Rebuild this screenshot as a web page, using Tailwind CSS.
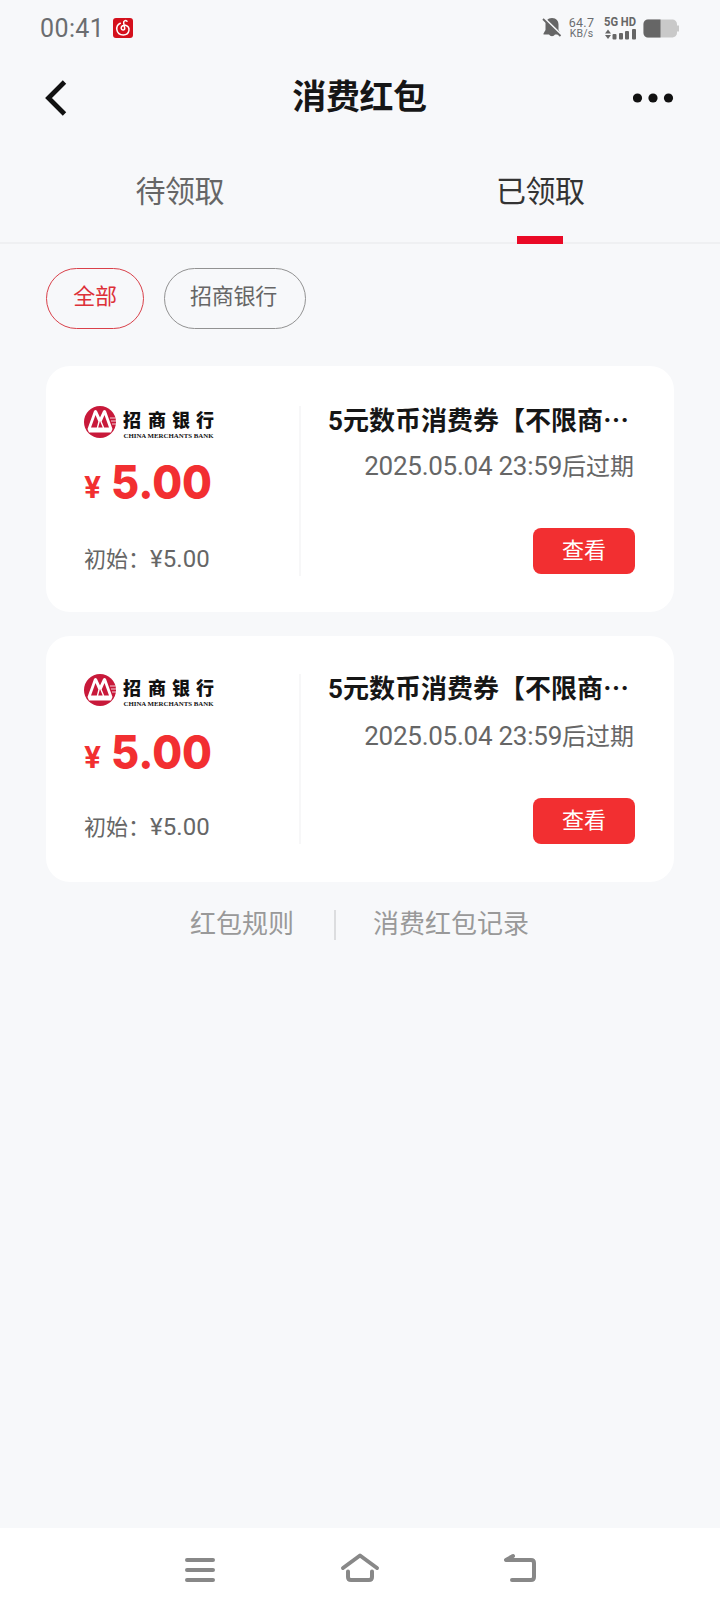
<!DOCTYPE html>
<html lang="zh-CN">
<head>
<meta charset="utf-8">
<title>消费红包</title>
<script src="https://cdn.jsdelivr.net/npm/@tailwindcss/browser@4"></script>
</head>
<body class="bg-[#f7f8fa]">
<svg class="hidden">
  <defs>
    <g id="bank">
      <circle cx="16" cy="16" r="16" fill="#c8193a"/>
      <path d="M26 12 H31.500 M27 15 H32 M28 18 H32" stroke="#fff" stroke-width=".8"/>
      <path d="M3.500 23 L10 5 Q11.500 3 13 5 L16 11.500 L19 5 Q20.500 3 22 5 L28.500 23 L27 26.500 H5 Z" fill="#fff"/>
      <path d="M7 21.500 L11.500 9 L14.300 15.500 L12.800 21.500 Z M16 15 L18.700 21.500 H14.200 Z M20.500 9 L25 21.500 H20.200 L17.700 15.500 Z" fill="#c8193a"/>
      <g font-family="'Noto Sans CJK SC', sans-serif" font-weight="900" font-size="18" fill="#111">
        <text x="39" y="21">招</text><text x="64" y="21">商</text><text x="88" y="21">银</text><text x="112" y="21">行</text>
      </g>
      <text x="39.500" y="31.500" font-family="'Liberation Serif', serif" font-weight="700" font-size="6.500" fill="#111" textLength="90" lengthAdjust="spacingAndGlyphs">CHINA MERCHANTS BANK</text>
    </g>
    <text id="amount" x="0" y="34.500" font-family="Inter" font-weight="800" font-size="46" fill="#f22f31" textLength="101" lengthAdjust="spacingAndGlyphs">5.00</text>
  </defs>
</svg>
<div class="flex h-[1612px] w-[720px] flex-col overflow-hidden font-['Roboto','Noto_Sans_CJK_SC',sans-serif] whitespace-nowrap">

  <header class="flex h-14 items-center justify-between pr-[41px] pl-10">
    <div class="flex items-center">
      <span class="w-[73px] pt-0.5 text-[25px] leading-8 tracking-[0.4px] text-[#6b6d70]">00:41</span>
      <svg width="20" height="20" viewBox="0 0 20 20"><rect width="20" height="20" rx="3" fill="#d4101c"/><path d="M14 3.200 C12.500 1.800 10.200 3 10.700 5.200 L11.700 10 C12 12.600 8.400 12.800 8.200 10.300 C8 8 10.500 6.800 12.500 7.300 C17.800 8.800 17 16.800 10.300 17 C2.500 17 2 7.500 7.300 5.200" fill="none" stroke="#fff" stroke-width="1.500" stroke-linecap="round"/></svg>
    </div>
    <div class="flex items-center">
      <svg width="20" height="22" viewBox="0 0 20 22"><path d="M10 1 C14.500 1 16.500 4 16.500 7.500 V13 L18.500 16.500 V17.500 H13 A3.400 3.400 0 0 1 7 17.500 H1.500 V16.500 L3.500 13 V7.500 C3.500 4 5.500 1 10 1Z" fill="#666"/><path d="M2 1 L20 18.500" stroke="#f7f8fa" stroke-width="2"/><path d="M1 2 L18.500 19" stroke="#666" stroke-width="1.800"/></svg>
      <div class="mr-px ml-1.5 flex w-[27px] flex-col items-center text-[#6b6d70]">
        <span class="text-[12.5px] leading-[11px] tracking-[0.3px]">64.7</span>
        <span class="text-[10.5px] leading-[11px] tracking-[0.2px]">KB/s</span>
      </div>
      <svg class="ml-2" width="34" height="24" viewBox="0 0 34 24" fill="#666"><text x="0" y="10" font-size="12" font-weight="700" font-family="Roboto" textLength="32" lengthAdjust="spacingAndGlyphs">5G HD</text><path d="M1 17.500 L4 13.500 L7 17.500Z M1 19 L4 23 L7 19Z"/><rect x="8.500" y="18" width="4" height="5.500" rx="1"/><rect x="15" y="17" width="4" height="6.500" rx="1"/><rect x="21" y="15" width="4" height="8.500" rx="1"/><rect x="28" y="13" width="4" height="10.500" rx="1"/></svg>
      <svg class="ml-[5px]" width="36" height="19" viewBox="0 0 36 19"><path d="M5 .5 H29 A4.500 4.500 0 0 1 34 5 V6.500 H36 V12.500 H34 V14 A4.500 4.500 0 0 1 29 18.500 H5 A4.500 4.500 0 0 1 .5 14 V5 A4.500 4.500 0 0 1 5 .5Z" fill="#c9c9c9"/><path d="M17.500 .5 V18.500 H5 A4.500 4.500 0 0 1 .5 14 V5 A4.500 4.500 0 0 1 5 .5Z" fill="#666"/></svg>
    </div>
  </header>

  <nav class="flex h-[84px] items-start justify-between px-11 pt-6">
    <svg width="24" height="36" viewBox="0 0 24 36"><path d="M20.500 2 L4.500 18 L20.500 34" fill="none" stroke="#111" stroke-width="4.800"/></svg>
    <h1 class="pt-px pl-[18px] text-[34px] leading-[32px] font-bold tracking-[-0.4px] text-[#161616]">消费红包</h1>
    <svg class="mt-[13px] mr-px" width="42" height="10" viewBox="0 0 42 10" fill="#111"><circle cx="4.500" cy="5" r="4.600"/><circle cx="20" cy="5" r="4.600"/><circle cx="35.500" cy="5" r="4.600"/></svg>
  </nav>

  <div class="flex h-[104px] border-b-2 border-[#eff0f2] text-[30px] tracking-[-0.5px]">
    <div class="flex-1 pt-8 pr-px text-center leading-10 text-[#666]">待领取</div>
    <div class="flex flex-1 flex-col items-center pt-8 leading-10 text-[#333]">已领取<i class="mt-6 h-2 w-[46px] shrink-0 bg-[#ea0a26]"></i></div>
  </div>

  <div class="flex gap-5 pt-6 pl-[46px] text-[22px] leading-[56px] tracking-[-0.2px]">
    <div class="h-[61px] w-[98px] rounded-full border border-[#d9414a] text-center text-[#dd3038]">全部</div>
    <div class="h-[61px] w-[142px] rounded-full border border-[#929292] pr-[3px] text-center text-[#666]">招商银行</div>
  </div>

  <main class="mt-[37px] flex flex-col gap-6 px-[46px]">
    <section class="flex h-[246px] rounded-3xl bg-white pt-10 pl-[38px]">
      <div class="flex h-[170px] w-[217px] flex-col border-r-2 border-[#f7f7f8]">
        <svg class="shrink-0" width="134" height="34" viewBox="0 0 134 34"><use href="#bank"/></svg>
        <div class="mt-6 flex h-9 items-end font-['Inter'] text-[#f22f31]"><span class="w-[27px] text-[30px] leading-[26px] font-bold">¥</span><svg class="overflow-visible" width="104" height="36"><use href="#amount"/></svg></div>
        <div class="mt-[43px] text-[22px] leading-8 text-[#666]">初始：<span class="text-[24px] tracking-[0.1px]">¥5.00</span></div>
      </div>
      <div class="flex w-[333px] flex-col items-end pl-[27px]">
        <h2 class="-mt-[3px] w-full text-[26px] leading-8 font-bold text-[#161616]">5元数币消费券【不限商<span class="font-['Noto_Sans_CJK_SC']">⋯</span></h2>
        <p class="mt-[11px] text-[24px] leading-9 text-[#666]"><span class="text-[26px] tracking-[-0.25px]">2025.05.04 23:59</span>后过期</p>
        <button class="mt-[43px] mr-[-1px] h-[46px] w-[102px] rounded-lg bg-[#f22f31] text-[22px] leading-[44px] text-white">查看</button>
      </div>
    </section>
    <section class="flex h-[246px] rounded-3xl bg-white pt-[38px] pl-[38px]">
      <div class="flex h-[170px] w-[217px] flex-col border-r-2 border-[#f7f7f8]">
        <svg class="shrink-0" width="134" height="34" viewBox="0 0 134 34"><use href="#bank"/></svg>
        <div class="mt-[26px] flex h-9 items-end font-['Inter'] text-[#f22f31]"><span class="w-[27px] text-[30px] leading-[26px] font-bold">¥</span><svg class="overflow-visible" width="104" height="36"><use href="#amount"/></svg></div>
        <div class="mt-[41px] text-[22px] leading-8 text-[#666]">初始：<span class="text-[24px] tracking-[0.1px]">¥5.00</span></div>
      </div>
      <div class="flex w-[333px] flex-col items-end pl-[27px]">
        <h2 class="-mt-[3px] w-full text-[26px] leading-8 font-bold text-[#161616]">5元数币消费券【不限商<span class="font-['Noto_Sans_CJK_SC']">⋯</span></h2>
        <p class="mt-[13px] text-[24px] leading-9 text-[#666]"><span class="text-[26px] tracking-[-0.25px]">2025.05.04 23:59</span>后过期</p>
        <button class="mt-[43px] mr-[-1px] h-[46px] w-[102px] rounded-lg bg-[#f22f31] text-[22px] leading-[44px] text-white">查看</button>
      </div>
    </section>
  </main>

  <footer class="mt-7 flex items-center pl-[190px] text-[26px] leading-[30px] text-[#999]">
    <span class="w-[144px] -translate-y-px">红包规则</span><i class="h-[30px] w-[2px] bg-[#dcdddf]"></i><span class="ml-[37px] -translate-y-px">消费红包记录</span>
  </footer>

  <div class="mt-auto flex h-[84px] shrink-0 items-center justify-center bg-white">
    <svg width="360" height="40" viewBox="0 0 360 40" fill="none" stroke="#888" stroke-width="4" stroke-linecap="round" stroke-linejoin="round"><path d="M7 10 H33 M7 20 H33 M7 30 H33"/><path d="M163 18 L180 5.500 L197 18 M168 21.500 V27 Q168 30 171 30 H189 Q192 30 192 27 V21.500"/><path d="M333 6 L326 10 H351 Q354 10 354 13 V27 Q354 30 351 30 H332"/></svg>
  </div>
</div>
</body>
</html>
